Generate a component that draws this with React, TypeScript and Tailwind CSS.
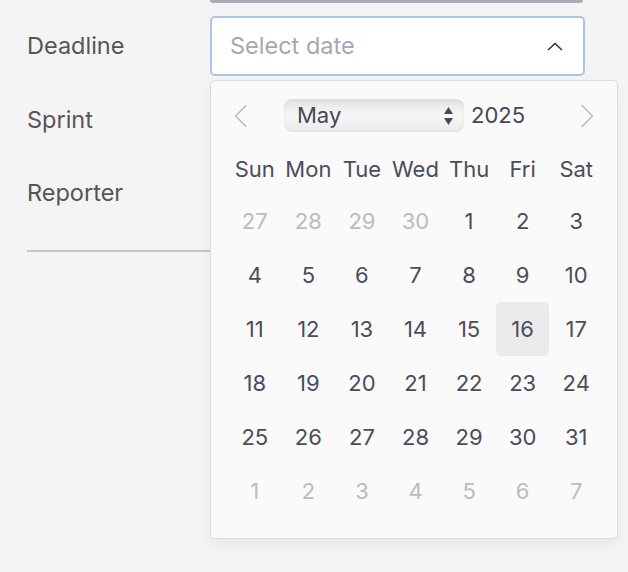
const weekdays = ["Sun", "Mon", "Tue", "Wed", "Thu", "Fri", "Sat"];

type Day = { n: number; muted?: boolean };

const days: Day[] = [
  ...[27, 28, 29, 30].map((n) => ({ n, muted: true })),
  ...Array.from({ length: 31 }, (_, i) => ({ n: i + 1 })),
  ...[1, 2, 3, 4, 5, 6, 7].map((n) => ({ n, muted: true })),
];

const font = { fontFamily: "Inter, 'Noto Sans', sans-serif" };

export default function App() {
  return (
    <div
      className="relative w-[628px] h-[572px] overflow-hidden bg-[#f4f4f4] text-[22px]"
      style={font}
    >
      {/* bottom edge of the field above */}
      <div className="ml-[210px] w-[373px] h-[3px] rounded-b-[3px] bg-[#a9abb6]" />

      <div className="pl-[27px] text-[23.5px]">
        <div className="flex items-center h-[60px] mt-[13px]">
          <span className="w-[183px] text-[#555]">Deadline</span>
          <div className="flex items-center justify-between w-[375px] h-[60px] bg-white border-2 border-[#a9c6ea] rounded-[5px] pl-[18px] pr-[20px]">
            <span className="text-[#a4a7b4]">Select date</span>
            <svg width="16" height="9" viewBox="0 0 16 9" fill="none">
              <path d="M1 8 L8 1.5 L15 8" stroke="#333" strokeWidth="1.6" />
            </svg>
          </div>
        </div>

        <div className="flex items-center h-[60px] mt-[14px] text-[#555]">Sprint</div>
        <div className="flex items-center h-[60px] mt-[13px] text-[#555]">Reporter</div>

        <div className="mt-[27px] w-[190px] h-[2px] bg-[#c4c4c4]" />
      </div>

      {/* date picker popover */}
      <div className="absolute left-[210px] top-[80px] w-[408px] h-[459px] bg-[#fafafa] border border-[#dcdcdc] rounded-[5px] shadow-[0_6px_14px_rgba(0,0,0,0.05)]">
        <div className="flex items-center pt-[18px] pl-[16px] pr-[16px]">
          <div className="w-[28px] flex justify-center">
            <svg width="14" height="24" viewBox="0 0 14 24" fill="none">
              <path d="M12.5 1 L1.5 12 L12.5 23" stroke="#b3b5c6" strokeWidth="1.3" />
            </svg>
          </div>
          <div className="ml-[29px] flex items-center justify-between w-[180px] h-[33px] rounded-[8px] bg-linear-to-b from-[#e2e2e2] via-[#f7f7f7] to-[#eaeaea] shadow-[inset_0_0_4px_rgba(0,0,0,0.06)] pl-[13px] pr-[10px] text-[#464755]">
            <span>May</span>
            <svg width="11" height="20" viewBox="0 0 11 20">
              <path d="M5.5 1 L10 8 L1 8 Z" fill="#4a4b58" />
              <path d="M5.5 19 L10 12 L1 12 Z" fill="#4a4b58" />
            </svg>
          </div>
          <span className="ml-[7px] text-[#464755]">2025</span>
          <div className="ml-auto w-[28px] flex justify-center">
            <svg width="14" height="24" viewBox="0 0 14 24" fill="none">
              <path d="M1.5 1 L12.5 12 L1.5 23" stroke="#b3b5c6" strokeWidth="1.3" />
            </svg>
          </div>
        </div>

        <div className="ml-[17px] w-[375px] grid grid-cols-7 mt-[19px] h-[36px] items-center text-[#4b4c5c]">
          {weekdays.map((d) => (
            <div key={d} className="text-center">
              {d}
            </div>
          ))}
        </div>

        <div className="ml-[17px] w-[375px] grid grid-cols-7 mt-[7px]">
          {days.map((d, i) => (
            <div
              key={i}
              className={
                "h-[54px] flex items-center justify-center rounded-[5px] " +
                (d.muted ? "text-[#bcbcbc]" : "text-[#4b4c5c]") +
                (!d.muted && d.n === 16 ? " bg-[#ebebeb]" : "")
              }
            >
              {d.n}
            </div>
          ))}
        </div>
      </div>
    </div>
  );
}
